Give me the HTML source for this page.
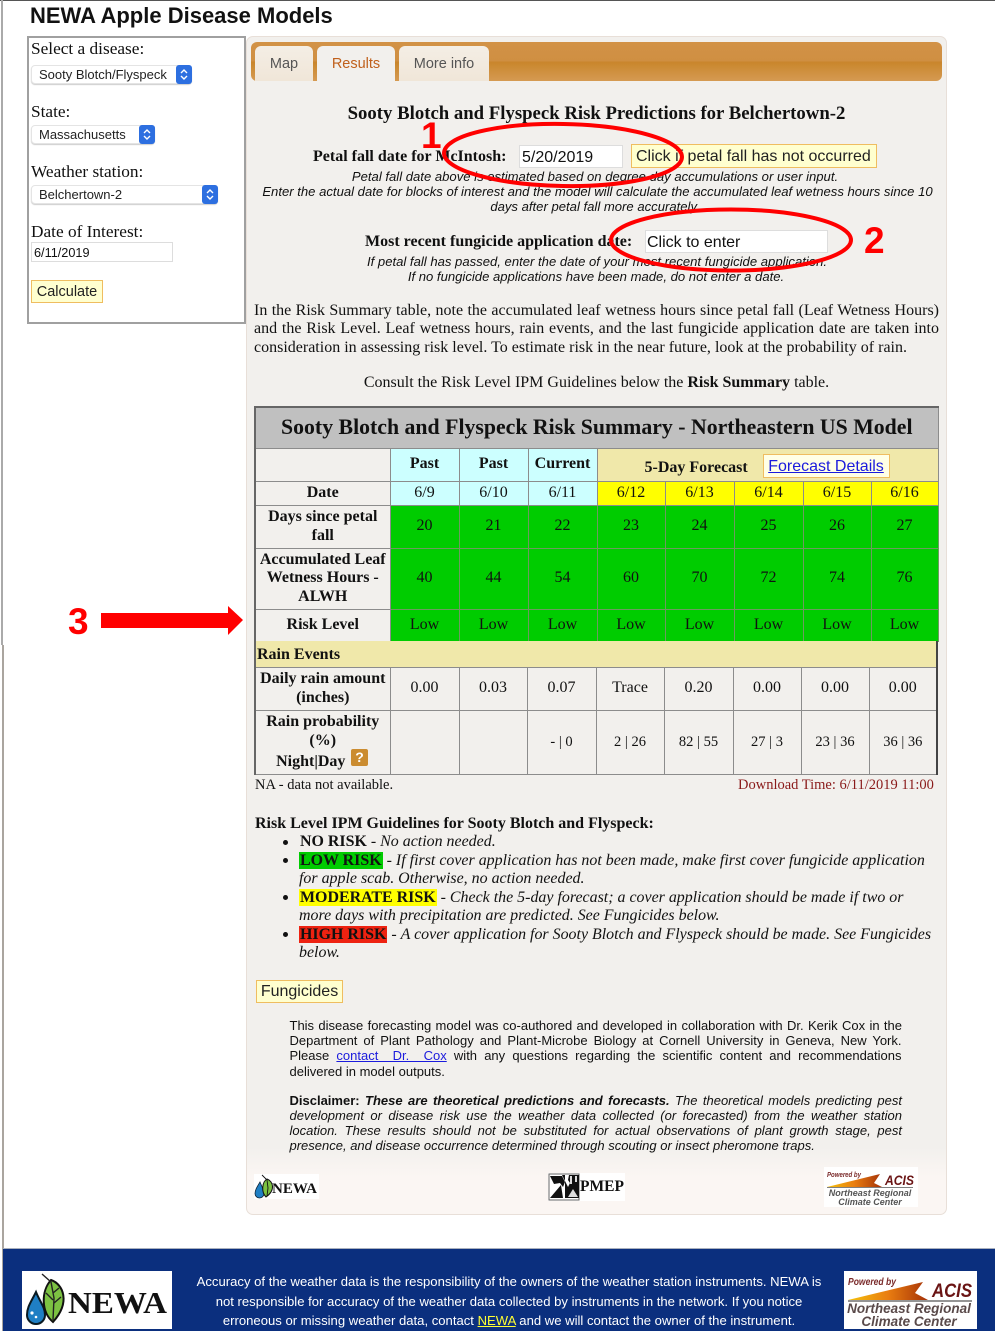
<!DOCTYPE html>
<html lang="en"><head><meta charset="utf-8"><title>NEWA Apple Disease Models</title>
<style>
html,body{margin:0;padding:0;background:#fff}
#p{position:relative;width:995px;height:1331px;overflow:hidden;background:#fff;font-family:"Liberation Sans",sans-serif;color:#111}
.t{position:absolute;white-space:nowrap;line-height:20px}
.s{font-family:"Liberation Serif",serif}
.b{font-weight:bold}
.i{font-style:italic}
.c{transform:translateX(-50%)}
.j{white-space:normal;text-align:justify;text-align-last:justify}
.box{position:absolute;box-sizing:border-box}
.sel{position:absolute;box-sizing:border-box;height:19px;background:#fff;border:1px solid #e4e4e4;border-radius:4px;font-size:13px;line-height:17px;padding-left:7px;color:#222;box-shadow:0 1px 1px #ccc}
.sel svg{position:absolute;right:-1px;top:-1px;width:16px;height:19px}
.inp{position:absolute;box-sizing:border-box;background:#fff;border:1px solid #ddd;color:#111}
.btn{position:absolute;box-sizing:border-box;background:#ffffcf;border:1.5px solid #efbd60;color:#222;white-space:nowrap}
.tab{position:absolute;top:46px;height:35px;box-sizing:border-box;border-radius:6px 6px 0 0;background:linear-gradient(#f4eee5,#f0e6d8);font-size:14.5px;line-height:37px;text-align:center;color:#555}
table{position:absolute;border-collapse:collapse;table-layout:fixed;font-family:"Liberation Serif",serif;font-size:16px;line-height:18.5px;color:#111}
td{border:1.5px solid #8c8c8c;padding:0;text-align:center;vertical-align:middle;overflow:hidden}
.h{font-weight:bold;background:#f2f0ed}
.bl{background:#ccffff}.yl{background:#ffff00}.gr{background:#00cc00;border-color:#6e9a60}.kh{background:#f0e8aa}
.bul{position:absolute;left:283px;width:5px;height:5px;border-radius:50%;background:#111}
.mk{padding:0 1px}
.up{padding-bottom:1px}
</style></head><body><div id="p">

<div class="box" style="left:0;top:0;width:995px;height:1px;background:#555"></div>
<div class="box" style="left:1px;top:0;width:2px;height:645px;background:#aaa"></div>
<div class="box" style="left:2px;top:645px;width:2px;height:686px;background:#aaa59f"></div>

<div class="t b" style="left:30px;top:6px;font-size:22px;color:#111">NEWA Apple Disease Models</div>

<!-- left panel -->
<div class="box" style="left:27px;top:36px;width:219px;height:288px;border:2px solid #a0a0a0;background:#fff"></div>
<div class="t s" style="left:31px;top:39px;font-size:17.3px">Select a disease:</div>
<div class="sel" style="left:31px;top:65px;width:161px">Sooty Blotch/Flyspeck<svg viewBox="0 0 16 19"><rect width="16" height="19" rx="3" fill="#2d6fe0"/><path d="M5 8l3-3 3 3M5 11l3 3 3-3" fill="none" stroke="#fff" stroke-width="1.4"/></svg></div>
<div class="t s" style="left:31px;top:102px;font-size:17.3px">State:</div>
<div class="sel" style="left:31px;top:125px;width:124px">Massachusetts<svg viewBox="0 0 16 19"><rect width="16" height="19" rx="3" fill="#2d6fe0"/><path d="M5 8l3-3 3 3M5 11l3 3 3-3" fill="none" stroke="#fff" stroke-width="1.4"/></svg></div>
<div class="t s" style="left:31px;top:162px;font-size:17.3px">Weather station:</div>
<div class="sel" style="left:31px;top:185px;width:187px">Belchertown-2<svg viewBox="0 0 16 19"><rect width="16" height="19" rx="3" fill="#2d6fe0"/><path d="M5 8l3-3 3 3M5 11l3 3 3-3" fill="none" stroke="#fff" stroke-width="1.4"/></svg></div>
<div class="t s" style="left:31px;top:222px;font-size:17.3px">Date of Interest:</div>
<div class="inp" style="left:31px;top:242px;width:142px;height:20px;font-size:12.7px;line-height:20px;padding-left:2px">6/11/2019</div>
<div class="btn" style="left:31px;top:280px;width:72px;height:23px;font-size:14.5px;line-height:22px;text-align:center">Calculate</div>

<!-- main panel -->
<div class="box" style="left:246px;top:36px;width:701px;height:1179px;border:1.5px solid #e8dfd8;border-radius:7px;background:linear-gradient(#f2f0ed 0,#f2f0ed 1110px,#fbf6f3 1140px)"></div>
<div class="box" style="left:251px;top:42px;width:691px;height:39px;border-radius:6px;background:linear-gradient(#d29247 0,#cf8f42 48%,#c9862c 52%,#d59a52 100%)"></div>
<div class="tab" style="left:255px;width:58px">Map</div>
<div class="tab" style="left:317px;width:78px;background:#f2f0ed;color:#c0601c">Results</div>
<div class="tab" style="left:399px;width:90px">More info</div>

<div class="t s b c" style="left:596.5px;top:104px;font-size:18.75px">Sooty Blotch and Flyspeck Risk Predictions for Belchertown-2</div>

<div class="t s b" style="left:313px;top:147px;font-size:16px">Petal fall date for McIntosh:</div>
<div class="inp" style="left:519px;top:145px;width:104px;height:23px;font-size:16px;line-height:23px;padding-left:2px">5/20/2019</div>
<div class="btn" style="left:631px;top:144px;width:246px;height:24px;font-size:16px;line-height:24px;padding-left:4px">Click if petal fall has not occurred</div>
<div class="t i c" style="left:595px;top:167px;font-size:13.1px">Petal fall date above is estimated based on degree day accumulations or user input.</div>
<div class="t i c" style="left:597.5px;top:182px;font-size:13.1px">Enter the actual date for blocks of interest and the model will calculate the accumulated leaf wetness hours since 10</div>
<div class="t i c" style="left:595px;top:197px;font-size:13.1px">days after petal fall more accurately.</div>

<div class="t s b" style="left:365px;top:232px;font-size:16px">Most recent fungicide application date:</div>
<div class="inp" style="left:645px;top:230px;width:183px;height:23px;font-size:16px;line-height:23px;padding-left:1px">Click to enter</div>
<div class="t i c" style="left:597px;top:252px;font-size:13.1px">If petal fall has passed, enter the date of your most recent fungicide application.</div>
<div class="t i c" style="left:596px;top:267px;font-size:13.1px">If no fungicide applications have been made, do not enter a date.</div>

<div class="t s j" style="left:254px;top:301px;width:685px;font-size:16px">In the Risk Summary table, note the accumulated leaf wetness hours since petal fall (Leaf Wetness Hours)</div>
<div class="t s j" style="left:254px;top:319px;width:685px;font-size:16px">and the Risk Level. Leaf wetness hours, rain events, and the last fungicide application date are taken into</div>
<div class="t s" style="left:254px;top:338px;font-size:16px;width:653px;white-space:normal;text-align:justify;text-align-last:justify">consideration in assessing risk level. To estimate risk in the near future, look at the probability of rain.</div>
<div class="t s c" style="left:596.5px;top:373px;font-size:16px">Consult the Risk Level IPM Guidelines below the <b>Risk Summary</b> table.</div>

<!-- risk table -->
<table style="left:254px;top:406px;width:683px;border-top:2px solid #666;border-left:2px solid #666">
<colgroup><col style="width:135px"><col style="width:69px"><col style="width:69px"><col style="width:69px"><col style="width:68px"><col style="width:69px"><col style="width:69px"><col style="width:68px"><col style="width:67px"></colgroup>
<tr style="height:41px"><td colspan="9" style="background:#c0c0c0;font-weight:bold;font-size:21.8px;padding-bottom:2px">Sooty Blotch and Flyspeck Risk Summary - Northeastern US Model</td></tr>
<tr style="height:33px"><td class="h"></td><td class="bl b up">Past</td><td class="bl b up">Past</td><td class="bl b up">Current</td><td colspan="5" class="kh b" style="position:relative;text-align:left;padding:6px 0 0 47px;font-size:16px;line-height:26px">5-Day Forecast<span style="position:absolute;left:165px;top:5px;width:127px;height:24px;box-sizing:border-box;background:#ffffe6;border:1.5px solid #efbd60;font:16px/23px 'Liberation Sans',sans-serif;text-align:center;color:#1b1bdd;text-decoration:underline">Forecast Details</span></td></tr>
<tr style="height:24px"><td class="h">Date</td><td class="bl">6/9</td><td class="bl">6/10</td><td class="bl">6/11</td><td class="yl">6/12</td><td class="yl">6/13</td><td class="yl">6/14</td><td class="yl">6/15</td><td class="yl">6/16</td></tr>
<tr style="height:43px"><td class="h">Days since petal fall</td><td class="gr">20</td><td class="gr">21</td><td class="gr">22</td><td class="gr">23</td><td class="gr">24</td><td class="gr">25</td><td class="gr">26</td><td class="gr">27</td></tr>
<tr style="height:61px"><td class="h">Accumulated Leaf Wetness Hours - ALWH</td><td class="gr">40</td><td class="gr">44</td><td class="gr">54</td><td class="gr">60</td><td class="gr">70</td><td class="gr">72</td><td class="gr">74</td><td class="gr">76</td></tr>
<tr style="height:32px"><td class="h">Risk Level</td><td class="gr">Low</td><td class="gr">Low</td><td class="gr">Low</td><td class="gr">Low</td><td class="gr">Low</td><td class="gr">Low</td><td class="gr">Low</td><td class="gr">Low</td></tr>
</table>

<table style="left:254px;top:641px;width:682px;border-left:2px solid #666;border-right:2px solid #444">
<colgroup><col style="width:135px"><col style="width:69px"><col style="width:68px"><col style="width:69px"><col style="width:68px"><col style="width:69px"><col style="width:68px"><col style="width:68px"><col style="width:68px"></colgroup>
<tr style="height:26px"><td colspan="9" class="kh b" style="text-align:left;padding:3px 0 0 1px;border-top:0">Rain Events</td></tr>
<tr style="height:43px;background:#f2f0ed"><td class="b">Daily rain amount (inches)</td><td>0.00</td><td>0.03</td><td>0.07</td><td>Trace</td><td>0.20</td><td>0.00</td><td>0.00</td><td>0.00</td></tr>
<tr style="height:64px;background:#f2f0ed;font-size:14.5px"><td class="b" style="font-size:16px;line-height:19.5px;vertical-align:top;padding-top:1px">Rain probability (%)<br><span style="position:relative;left:-12px;top:1px">Night|Day</span></td><td></td><td></td><td>- | 0</td><td>2 | 26</td><td>82 | 55</td><td>27 | 3</td><td>23 | 36</td><td>36 | 36</td></tr>
</table>
<div class="box" style="left:351px;top:749px;width:17px;height:17px;border-radius:2px;background:#cb8c30;color:#fff;font:bold 14px/17px 'Liberation Sans',sans-serif;text-align:center">?</div>

<div class="t s" style="left:255px;top:775px;font-size:14.5px">NA - data not available.</div>
<div class="t s" style="left:738px;top:775px;font-size:14.5px;color:#8a1a1a">Download Time: 6/11/2019 11:00</div>

<div class="t s b" style="left:255px;top:814px;font-size:16px">Risk Level IPM Guidelines for Sooty Blotch and Flyspeck:</div>

<div class="bul" style="top:840px"></div><div class="bul" style="top:858px"></div><div class="bul" style="top:895px"></div><div class="bul" style="top:932px"></div>
<div class="t s" style="left:300px;top:832px;font-size:15.95px"><b>NO RISK</b> - <i>No action needed.</i></div>
<div class="t s" style="left:299px;top:851px;font-size:15.95px"><b class="mk" style="background:#00cc00">LOW RISK</b> - <i>If first cover application has not been made, make first cover fungicide application</i></div>
<div class="t s i" style="left:299px;top:869px;font-size:15.95px">for apple scab. Otherwise, no action needed.</div>
<div class="t s" style="left:299px;top:888px;font-size:15.95px"><b class="mk" style="background:#ffff00">MODERATE RISK</b> - <i>Check the 5-day forecast; a cover application should be made if two or</i></div>
<div class="t s i" style="left:299px;top:906px;font-size:15.95px">more days with precipitation are predicted. See Fungicides below.</div>
<div class="t s" style="left:299px;top:925px;font-size:15.95px"><b class="mk" style="background:#ee2211">HIGH RISK</b> - <i>A cover application for Sooty Blotch and Flyspeck should be made. See Fungicides</i></div>
<div class="t s i" style="left:299px;top:943px;font-size:15.95px">below.</div>

<div class="btn" style="left:256px;top:980px;width:87px;height:23px;font-size:16px;line-height:21px;text-align:center">Fungicides</div>

<div class="t j" style="left:289.5px;top:1015.5px;width:612.5px;font-size:13px">This disease forecasting model was co-authored and developed in collaboration with Dr. Kerik Cox in the</div>
<div class="t j" style="left:289.5px;top:1030.5px;width:612px;font-size:13px">Department of Plant Pathology and Plant-Microbe Biology at Cornell University in Geneva, New York.</div>
<div class="t j" style="left:289.5px;top:1046px;width:612px;font-size:13px">Please <span style="color:#1b1bdd;text-decoration:underline">contact&nbsp; Dr.&nbsp; Cox</span> with any questions regarding the scientific content and recommendations</div>
<div class="t" style="left:289.5px;top:1061.5px;font-size:13px">delivered in model outputs.</div>
<div class="t j" style="left:289.5px;top:1090.5px;width:612.5px;font-size:13px"><b>Disclaimer:</b> <b class="i">These are theoretical predictions and forecasts.</b> <i>The theoretical models predicting pest</i></div>
<div class="t i j" style="left:289.5px;top:1105.5px;width:612.5px;font-size:13px">development or disease risk use the weather data collected (or forecasted) from the weather station</div>
<div class="t i j" style="left:289.5px;top:1121px;width:612.5px;font-size:13px">location. These results should not be substituted for actual observations of plant growth stage, pest</div>
<div class="t i" style="left:289.5px;top:1136px;font-size:13px">presence, and disease occurrence determined through scouting or insect pheromone traps.</div>

<!-- small logos -->
<svg style="position:absolute;left:254px;top:1174px" width="65" height="25" viewBox="0 0 65 25">
<rect width="65" height="25" fill="#fff"/>
<path d="M6 8C3 13 1 16 1 19.500a4.500 4.500 0 0 0 9 0C10 16 8 13 6 8z" fill="#1f7fc4" stroke="#123" stroke-width=".8"/>
<path d="M12 23C7 18 8 8 13 5c6 2 9 11 -1 18z" fill="#7cc242" stroke="#111" stroke-width="1"/>
<path d="M8 1l5 5 1 8-1 8" fill="none" stroke="#111" stroke-width=".9"/>
<text x="18" y="19" font-family="Liberation Serif,serif" font-weight="bold" font-size="14.500" textLength="45" lengthAdjust="spacingAndGlyphs" fill="#111">NEWA</text>
</svg>
<svg style="position:absolute;left:548px;top:1173px" width="77" height="28" viewBox="0 0 77 28">
<rect width="77" height="28" fill="#fff"/>
<rect x="1" y="1" width="30" height="26" fill="#fff" stroke="#666"/>
<path d="M2 3h12l3 6-2 5-3-4-6 1zM2 25l11-13 2 13z" fill="#111"/>
<path d="M14 2h3v23h14V2H21l-1 5 2 3-2 4z" fill="#111"/>
<path d="M20 24l5-8 5 8z" fill="#ddd"/><path d="M22 3h2v8h-2z M27 3h2v6h-2z" fill="#ddd"/>
<text x="32" y="18" font-family="Liberation Serif,serif" font-weight="bold" font-size="16" textLength="44" lengthAdjust="spacingAndGlyphs" fill="#111">PMEP</text>
</svg>
<svg style="position:absolute;left:824px;top:1167px" width="94" height="40" viewBox="0 0 94 40">
<defs><linearGradient id="ag" x1="0" x2="1" y1="0" y2="0"><stop offset="0" stop-color="#f4c20d"/><stop offset=".5" stop-color="#e97d10"/><stop offset="1" stop-color="#a53208"/></linearGradient></defs>
<rect width="94" height="40" fill="#fff"/>
<text x="3" y="10" font-family="Liberation Sans,sans-serif" font-weight="bold" font-style="italic" font-size="7.500" textLength="34" lengthAdjust="spacingAndGlyphs" fill="#7a2a2a">Powered by</text>
<path d="M3 20L56 7l-6 9 8 4z" fill="url(#ag)"/><path d="M3 20.500h86" stroke="#555" stroke-width=".8"/>
<text x="61" y="18" font-family="Liberation Sans,sans-serif" font-weight="bold" font-style="italic" font-size="13.500" textLength="29" lengthAdjust="spacingAndGlyphs" fill="#6a1414">ACIS</text>
<text x="46" y="29" text-anchor="middle" font-family="Liberation Sans,sans-serif" font-weight="bold" font-style="italic" font-size="9" fill="#555">Northeast Regional</text>
<text x="46" y="38" text-anchor="middle" font-family="Liberation Sans,sans-serif" font-weight="bold" font-style="italic" font-size="9" fill="#555">Climate Center</text>
</svg>

<!-- footer -->
<div class="box" style="left:3px;top:1248px;width:992px;height:83px;background:#0b2f7e;border-top:1px solid #a9b0bd"></div>
<svg style="position:absolute;left:22px;top:1271px" width="150" height="58" viewBox="0 0 150 58">
<rect width="150" height="58" fill="#fff"/>
<path d="M14 21C9 31 5 36 5 44a9 9 0 0 0 18 0C23 36 18 31 14 21z" fill="#1f7fc4" stroke="#0a1a22" stroke-width="2"/>
<circle cx="10" cy="42" r="1.600" fill="#fff"/><circle cx="14" cy="46" r="1.300" fill="#fff"/>
<path d="M31 51C19 41 19 20 29 9c12 4 20 22 2 42z" fill="#7cc242" stroke="#111" stroke-width="2"/>
<path d="M20 3l9 8 3 16-1 22M31 22l6-5M32 32l7-6M24 22l7 7" fill="none" stroke="#222" stroke-width="1.400"/>
<text x="46" y="42" font-family="Liberation Serif,serif" font-weight="bold" font-size="31" textLength="99" lengthAdjust="spacingAndGlyphs" fill="#111">NEWA</text>
</svg>
<div class="t c" style="left:509px;top:1272px;font-size:13.1px;color:#fff">Accuracy of the weather data is the responsibility of the owners of the weather station instruments. NEWA is</div>
<div class="t c" style="left:509px;top:1292px;font-size:13.1px;color:#fff">not responsible for accuracy of the weather data collected by instruments in the network. If you notice</div>
<div class="t c" style="left:509px;top:1311px;font-size:13.1px;color:#fff">erroneous or missing weather data, contact <span style="color:#ffff33;text-decoration:underline">NEWA</span> and we will contact the owner of the instrument.</div>
<svg style="position:absolute;left:844px;top:1271px" width="133" height="58" viewBox="0 0 133 58">
<defs><linearGradient id="ah" x1="0" x2="1" y1="0" y2="0"><stop offset="0" stop-color="#f4c20d"/><stop offset=".5" stop-color="#e97d10"/><stop offset="1" stop-color="#a53208"/></linearGradient></defs>
<rect width="133" height="58" fill="#fff"/>
<text x="4" y="14" font-family="Liberation Sans,sans-serif" font-weight="bold" font-style="italic" font-size="10.500" textLength="48" lengthAdjust="spacingAndGlyphs" fill="#7a2a2a">Powered by</text>
<path d="M4 29L79 11l-8 11 13 7z" fill="url(#ah)"/><path d="M4 30h124" stroke="#555" stroke-width="1.200"/>
<text x="88" y="26" font-family="Liberation Sans,sans-serif" font-weight="bold" font-style="italic" font-size="19.500" textLength="40" lengthAdjust="spacingAndGlyphs" fill="#6a1414">ACIS</text>
<text x="65" y="42" text-anchor="middle" font-family="Liberation Sans,sans-serif" font-weight="bold" font-style="italic" font-size="13.500" fill="#5a4a4a">Northeast Regional</text>
<text x="65" y="55" text-anchor="middle" font-family="Liberation Sans,sans-serif" font-weight="bold" font-style="italic" font-size="13.500" fill="#5a4a4a">Climate Center</text>
</svg>

<!-- red annotations -->
<svg style="position:absolute;left:0;top:0" width="995" height="1331" viewBox="0 0 995 1331">
<ellipse cx="563" cy="155" rx="119" ry="31" fill="none" stroke="#f00" stroke-width="4" transform="rotate(1 563 155)"/>
<ellipse cx="731" cy="240" rx="120" ry="30.500" fill="none" stroke="#f00" stroke-width="4"/>
<path d="M101 613h127v-7l15 14-15 15v-7H101z" fill="#f00"/>
<text x="421" y="148" font-family="Liberation Sans,sans-serif" font-weight="bold" font-size="37" fill="#f00">1</text>
<text x="864" y="253" font-family="Liberation Sans,sans-serif" font-weight="bold" font-size="37" fill="#f00">2</text>
<text x="68" y="634" font-family="Liberation Sans,sans-serif" font-weight="bold" font-size="37" fill="#f00">3</text>
</svg>
</div></body></html>
